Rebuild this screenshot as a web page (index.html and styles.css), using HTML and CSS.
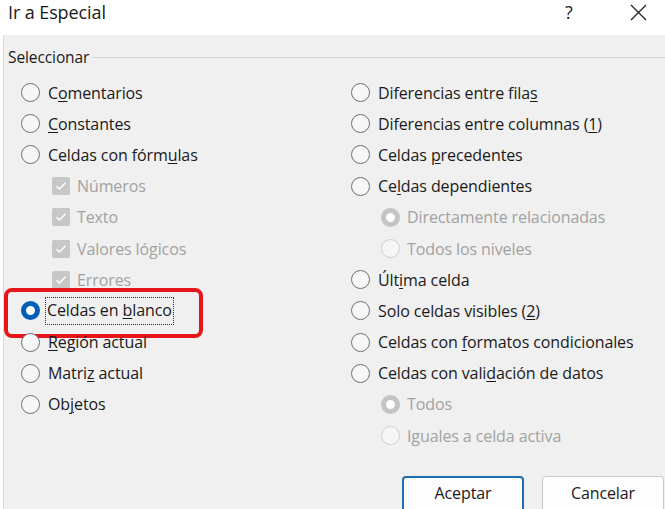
FILE: index.html
```html
<!DOCTYPE html>
<html lang="es">
<head>
<meta charset="utf-8">
<title>Ir a Especial</title>
<link rel="stylesheet" href="styles.css">
</head>
<body>
<div class="dialog">
  <div class="titlebar">
    <span class="title">Ir a Especial</span>
    <span class="help">?</span>
    <span class="close"><svg width="17" height="17" viewBox="0 0 17 17"><path d="M1 1L16 16M16 1L1 16" stroke="#222" stroke-width="1.3" fill="none"/></svg></span>
  </div>
  <div class="content">
    <div class="legend-row"><span class="legend">Seleccionar</span><span class="legend-line"></span></div>
    <div class="columns">
      <div class="col">
        <div class="opt"><span class="radio"></span><span>C<u>o</u>mentarios</span></div>
        <div class="opt"><span class="radio"></span><span><u>C</u>onstantes</span></div>
        <div class="opt"><span class="radio"></span><span>Celdas con fórm<u>u</u>las</span></div>
        <div class="opt sub dis"><span class="check"><svg width="12" height="10" viewBox="0 0 12 10"><path d="M1.5 5.2L4.5 8L10.5 1.8" stroke="#fff" stroke-width="1.4" fill="none"/></svg></span><span>Números</span></div>
        <div class="opt sub dis"><span class="check"><svg width="12" height="10" viewBox="0 0 12 10"><path d="M1.5 5.2L4.5 8L10.5 1.8" stroke="#fff" stroke-width="1.4" fill="none"/></svg></span><span>Texto</span></div>
        <div class="opt sub dis"><span class="check"><svg width="12" height="10" viewBox="0 0 12 10"><path d="M1.5 5.2L4.5 8L10.5 1.8" stroke="#fff" stroke-width="1.4" fill="none"/></svg></span><span>Valores lógicos</span></div>
        <div class="opt sub dis"><span class="check"><svg width="12" height="10" viewBox="0 0 12 10"><path d="M1.5 5.2L4.5 8L10.5 1.8" stroke="#fff" stroke-width="1.4" fill="none"/></svg></span><span>Errores</span></div>
        <div class="opt selected"><span class="radio on"></span><span class="focus">Celdas en <u>b</u>lanco</span><span class="highlight"></span></div>
        <div class="opt"><span class="radio"></span><span><u>R</u>egión actual</span></div>
        <div class="opt"><span class="radio"></span><span>Matri<u>z</u> actual</span></div>
        <div class="opt"><span class="radio"></span><span>Ob<u>j</u>etos</span></div>
      </div>
      <div class="col">
        <div class="opt"><span class="radio"></span><span>Diferencias entre fila<u>s</u></span></div>
        <div class="opt"><span class="radio"></span><span>Diferencias entre columnas (<u>1</u>)</span></div>
        <div class="opt"><span class="radio"></span><span>Celdas <u>p</u>recedentes</span></div>
        <div class="opt"><span class="radio"></span><span>Ce<u>l</u>das dependientes</span></div>
        <div class="opt sub2 dis"><span class="radio dis-on"></span><span>Directamente relacionadas</span></div>
        <div class="opt sub2 dis"><span class="radio dis-off"></span><span>Todos los niveles</span></div>
        <div class="opt"><span class="radio"></span><span>Últ<u>i</u>ma celda</span></div>
        <div class="opt"><span class="radio"></span><span>Solo celdas visibles (<u>2</u>)</span></div>
        <div class="opt"><span class="radio"></span><span>Celdas con <u>f</u>ormatos condicionales</span></div>
        <div class="opt"><span class="radio"></span><span>Celdas con vali<u>d</u>ación de datos</span></div>
        <div class="opt sub2 dis"><span class="radio dis-on"></span><span>Todos</span></div>
        <div class="opt sub2 dis"><span class="radio dis-off"></span><span>Iguales a celda activa</span></div>
      </div>
    </div>
    <div class="buttons">
      <button class="btn default">Aceptar</button>
      <button class="btn">Cancelar</button>
    </div>
  </div>
</div>
</body>
</html>
```

FILE: styles.css
```css
* { box-sizing: border-box; }
html, body { margin: 0; padding: 0; }
body {
  width: 665px;
  height: 509px;
  overflow: hidden;
  background: #fff;
  font-family: "Open Sans", "Noto Sans", sans-serif;
  color: #1a1a1a;
}
.dialog { width: 665px; height: 509px; display: flex; flex-direction: column; }
.titlebar {
  height: 35px;
  background: #fff;
  display: flex;
  align-items: center;
  padding-left: 8px;
  flex: none;
}
.title { font-size: 18px; flex: 1; letter-spacing: -0.1px; padding-bottom: 11px; }
.help { font-size: 18px; width: 20px; margin-right: 45px; padding-bottom: 11px; color: #222; }
.close { width: 17px; height: 17px; margin-right: 18px; display: flex; margin-bottom: 10px; }
.content {
  flex: 1;
  background: #f0f0f0;
  margin-left: 3px;
  border-left: 1px solid #dadada;
  display: flex;
  flex-direction: column;
  font-size: 16px;
}
.legend-row { display: flex; align-items: center; height: 42px; padding-left: 4px; padding-top: 2px; }
.legend { font-size: 15.5px; letter-spacing: -0.1px; }
.legend-line { flex: 1; border-top: 1px solid #d6d6d6; margin-left: 3px; margin-top: 1px; }
.columns {
  display: grid;
  grid-template-columns: 330px 1fr;
  padding-left: 17px;
}
.col { display: flex; flex-direction: column; }
.opt {
  height: 31.2px;
  display: flex;
  align-items: center;
  gap: 8px;
  letter-spacing: -0.1px;
  position: relative;
}
.opt u { text-decoration-thickness: 1px; text-underline-offset: 2px; }
.radio {
  width: 19px;
  height: 19px;
  border-radius: 50%;
  border: 1.5px solid #707070;
  background: #f7f7f7;
  flex: none;
}
.radio.on {
  border: 5.5px solid #005fb8;
  background: #fff;
}
.radio.dis-on {
  border: 5.5px solid #c4c4c4;
  background: #fff;
}
.radio.dis-off {
  border: 1.5px solid #cfcfcf;
  background: #f6f6f6;
}
.sub { padding-left: 31px; gap: 7px; }
.sub2 { padding-left: 30px; gap: 7px; }
.dis { color: #a2a2a2; }
.check {
  width: 18px;
  height: 18px;
  background: #c7c7c7;
  border-radius: 2px;
  display: flex;
  align-items: center;
  justify-content: center;
  flex: none;
}
.selected { gap: 6px; }
.focus {
  outline: 1px dotted #333;
  padding: 3px 1px 4px 1px;
  line-height: 19px;
}
.highlight {
  position: absolute;
  left: -17px;
  top: -7px;
  width: 199px;
  height: 50px;
  border: 4px solid #e8141b;
  border-radius: 8px;
}
.buttons {
  display: flex;
  justify-content: flex-end;
  gap: 18px;
  padding-top: 25px;
}
.btn {
  width: 122px;
  height: 38px;
  font-family: "Open Sans", "Noto Sans", sans-serif;
  font-size: 16px;
  color: #1a1a1a;
  background: #fdfdfd;
  border: 1px solid #c8c8c8;
  border-radius: 4px;
  letter-spacing: -0.1px;
  padding: 0 0 4px;
}
.btn.default { border: 2px solid #1f6fb0; }
.btn:last-child { margin-right: 1px; }
```
